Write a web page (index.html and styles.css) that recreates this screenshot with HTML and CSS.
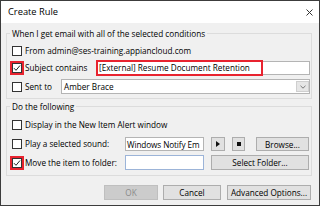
FILE: index.html
```html
<!DOCTYPE html>
<html>
<head>
<meta charset="utf-8">
<link rel="stylesheet" href="styles.css">
</head>
<body>
<div class="dialog">
  <div class="titlebar">
    <span class="title">Create Rule</span>
    <svg class="close" width="7" height="7" viewBox="0 0 7 7"><path d="M0.5 0.5L6.5 6.5M6.5 0.5L0.5 6.5" stroke="#333" stroke-width="1"/></svg>
  </div>
  <div class="content">
    <div class="group g1">
      <div class="legend">When I get email with all of the selected conditions</div>
      <div class="row r1">
        <span class="cb"></span><span class="lbl">From admin@ses-training.appiancloud.com</span>
      </div>
      <div class="row r2">
        <span class="cb hl-cb"><svg width="8" height="8" viewBox="0 0 8 8"><path d="M1 4.2L3 6.3L7 1.5" fill="none" stroke="#222" stroke-width="1"/></svg></span><span class="lbl">Subject contains</span>
        <div class="textbox subject"><span class="hl-text">[External] Resume Document Retention</span></div>
      </div>
      <div class="row r3">
        <span class="cb"></span><span class="lbl">Sent to</span>
        <div class="combo"><span class="combo-text">Amber Brace</span><span class="combo-btn"><svg width="6" height="4" viewBox="0 0 6 4"><path d="M0.5 0.8L3 3.2L5.5 0.8" fill="none" stroke="#777" stroke-width="1"/></svg></span></div>
      </div>
    </div>
    <div class="group g2">
      <div class="legend">Do the following</div>
      <div class="row s1">
        <span class="cb"></span><span class="lbl">Display in the New Item Alert window</span>
      </div>
      <div class="row s2">
        <span class="cb"></span><span class="lbl">Play a selected sound:</span>
        <div class="textbox sound"><span class="tb-text">Windows Notify Em</span></div>
        <span class="btn icon-btn play"><svg width="4" height="6" viewBox="0 0 4 6"><path d="M0 0L4 3L0 6Z" fill="#111"/></svg></span>
        <span class="btn icon-btn stop"><svg width="4" height="4" viewBox="0 0 4 4"><rect width="4" height="4" fill="#111"/></svg></span>
        <span class="btn browse">Browse...</span>
      </div>
      <div class="row s3">
        <span class="cb hl-cb"><svg width="8" height="8" viewBox="0 0 8 8"><path d="M1 4.2L3 6.3L7 1.5" fill="none" stroke="#222" stroke-width="1"/></svg></span><span class="lbl">Move the item to folder:</span>
        <div class="textbox folder"></div>
        <span class="btn select">Select Folder...</span>
      </div>
    </div>
    <div class="buttons">
      <span class="btn ok disabled">OK</span>
      <span class="btn cancel">Cancel</span>
      <span class="btn adv">Advanced Options...</span>
    </div>
  </div>
</div>
</body>
</html>
```
FILE: styles.css
```css
* { box-sizing: border-box; }
html, body { margin: 0; padding: 0; background: #fff; }
body {
  font-family: "Open Sans", "Noto Sans", sans-serif;
  font-size: 8.2px;
  color: #000;
}
.dialog {
  width: 320px;
  height: 206px;
  border: 1px solid #3c3c3c;
  display: flex;
  flex-direction: column;
  background: #f0f0f0;
}
.titlebar {
  height: 22px;
  flex: none;
  background: #fff;
  display: flex;
  align-items: center;
  padding: 0 6px 1px 7px;
}
.title { flex: 1; font-size: 9.3px; line-height: 12px; }
.close { display: block; margin-top: 1px; }
.content {
  flex: 1;
  padding: 10px 7px 0 5px;
  display: flex;
  flex-direction: column;
}
.group {
  flex: none;
  border: 1px solid #dcdcdc;
  display: flex;
  flex-direction: column;
}
.legend {
  align-self: flex-start;
  margin: -6px 0 0 3px;
  padding: 0 2px;
  height: 11px;
  line-height: 11px;
  background: #f0f0f0;
  white-space: nowrap;
}
.row {
  display: flex;
  align-items: center;
  padding-left: 5px;
  height: 14px;
  white-space: nowrap;
}
.g1 { padding: 0 1px 4px 0; }
.g1 .r1 { margin-top: 5px; }
.g1 .r2 { margin-top: 3px; }
.g1 .r3 { margin-top: 4px; height: 15px; }
.g2 { margin-top: 7px; padding: 0 2px 5px 0; }
.g2 .s1 { margin-top: 6px; }
.g2 .s2 { margin-top: 5px; }
.g2 .s3 { margin-top: 4px; height: 15px; }
.cb {
  flex: none;
  width: 10px;
  height: 10px;
  border: 1px solid #333;
  background: #fff;
  margin-right: 3px;
  display: flex;
  align-items: center;
  justify-content: center;
}
.cb svg { display: block; }
.hl-cb { outline: 2px solid #e8232f; }
.lbl { line-height: 12px; }
.textbox {
  flex: none;
  height: 100%;
  background: #fff;
  border: 1px solid #b4b4b4;
  display: flex;
  align-items: center;
}
.subject { margin-left: auto; width: 213px; }
.hl-text {
  display: block;
  width: 163px;
  height: 100%;
  line-height: 12px;
  padding-left: 1px;
  outline: 2px solid #e8232f;
}
.combo {
  margin-left: auto;
  width: 249px;
  height: 100%;
  background: #fff;
  border: 1px solid #b4b4b4;
  display: flex;
  align-items: stretch;
  padding: 1px 0 1px 2px;
}
.combo-text { flex: 1; line-height: 11px; }
.combo-btn {
  width: 13px;
  background: #e6e6e6;
  border: 1px solid #cfcfcf;
  display: flex;
  align-items: center;
  justify-content: center;
}
.combo-btn svg { display: block; }
.sound { margin-left: auto; width: 79px; padding-left: 1px; overflow: hidden; }
.tb-text { line-height: 11px; letter-spacing: -0.1px; }
.folder { margin-left: auto; width: 79px; border-color: #9cb4d8; }
.btn {
  flex: none;
  height: 100%;
  background: #e1e1e1;
  border: 1px solid #adadad;
  display: flex;
  align-items: center;
  justify-content: center;
  line-height: 11px;
}
.btn svg { display: block; }
.play { margin-left: 7px; width: 14px; }
.stop { margin-left: 7px; width: 13px; }
.browse { margin-left: 11px; width: 53px; }
.select { margin-left: 7px; width: 98px; }
.buttons {
  display: flex;
  justify-content: flex-end;
  height: 15px;
  margin: 9px 1px 0 0;
}
.ok { width: 54px; }
.cancel { width: 58px; margin-left: 5px; }
.adv { width: 84px; margin-left: 6px; }
.disabled { background: #cccccc; border-color: #bfbfbf; color: #8a8a8a; }
```
